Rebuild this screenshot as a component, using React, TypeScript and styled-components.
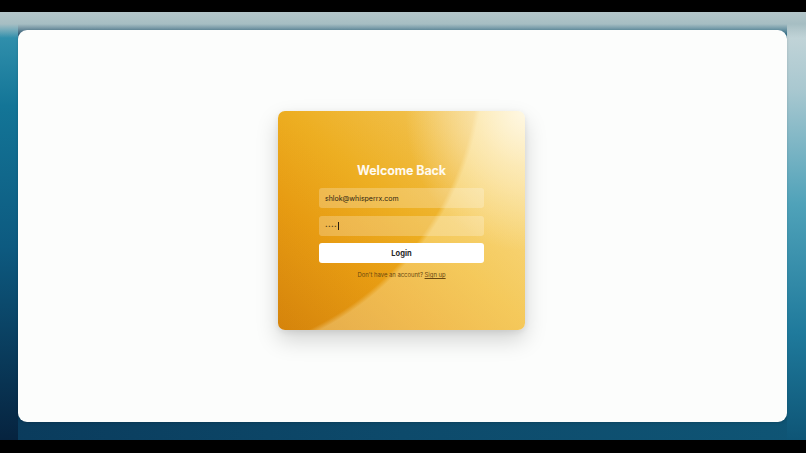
import React from "react";
import styled, { createGlobalStyle } from "styled-components";

const GlobalStyle = createGlobalStyle`
  html, body { margin: 0; padding: 0; background: #000; }
  body { font-family: "Inter", "Liberation Sans", Arial, sans-serif; }
  * { box-sizing: border-box; }
`;

const Frame = styled.div`
  width: 806px;
  height: 453px;
  display: flex;
  flex-direction: column;
  background: #000;
  overflow: hidden;
`;

const BlackBar = styled.div<{ $h: number }>`
  height: ${(p) => p.$h}px;
  flex: none;
  background: #000;
`;

const Stage = styled.div`
  flex: 1;
  display: flex;
  padding: 18px 19px 18px 18px;
  background:
    linear-gradient(180deg, #b3c5c9 0px, #a6bec3 12px, rgba(166, 190, 195, 0) 26px) top / 100% 30px no-repeat,
    linear-gradient(180deg, #3a98b3 0%, #137597 22%, #0d5a80 55%, #06233f 100%) left / 18px 100% no-repeat,
    linear-gradient(180deg, #ccd9db 0%, #a9c8d0 18%, #4fa2b9 45%, #1f7a9c 75%, #0e5576 100%) right / 19px 100% no-repeat,
    linear-gradient(90deg, #0a3b5c 0%, #0d4a6b 50%, #0f5575 100%);
`;

const Panel = styled.div`
  flex: 1;
  display: flex;
  align-items: center;
  justify-content: center;
  background: #fcfdfc;
  border-radius: 9px;
  box-shadow: 0 1px 3px rgba(0, 0, 0, 0.15);
`;

const Card = styled.div`
  width: 247px;
  height: 219px;
  margin: 0 2px 11px 0;
  border-radius: 7px;
  display: flex;
  flex-direction: column;
  align-items: center;
  padding-top: 52px;
  box-shadow: 0 10px 22px rgba(0, 0, 0, 0.17), 0 2px 6px rgba(0, 0, 0, 0.08);
  background:
    radial-gradient(ellipse 120px 140px at 100% 0%, rgba(255, 250, 235, 0.9) 0%, rgba(255, 246, 220, 0.55) 40%, rgba(255, 243, 210, 0) 100%),
    radial-gradient(circle 303px at -98px -51px, rgba(225, 140, 8, 0.14) 98.6%, rgba(255, 238, 185, 0.36) 100.4%),
    linear-gradient(to top right, #d3820c 0%, #e89e14 30%, #efb426 52%, #f3c650 75%, #f7dc8e 100%);
`;

const Title = styled.h1`
  margin: 0 0 10px;
  font-size: 12.5px;
  line-height: 15px;
  font-weight: 700;
  color: #fffaf0;
  letter-spacing: -0.1px;
`;

const Form = styled.div`
  width: 165px;
  display: flex;
  flex-direction: column;
  gap: 8px;
`;

const Field = styled.div`
  height: 20px;
  border-radius: 3px;
  background: rgba(255, 255, 255, 0.24);
  display: flex;
  align-items: center;
  padding-left: 6px;
  font-size: 7px;
  color: #2e2410;
`;

const Dots = styled.span`
  font-size: 8px;
  font-weight: 700;
  letter-spacing: 0.3px;
  color: #3a2c10;
`;

const Caret = styled.span`
  display: inline-block;
  width: 1px;
  height: 8px;
  margin-left: 1px;
  background: #2a2010;
`;

const Button = styled.div`
  height: 20px;
  margin-top: -1px;
  border-radius: 3px;
  background: #ffffff;
  display: flex;
  align-items: center;
  justify-content: center;
  font-size: 7.5px;
  font-weight: 700;
  color: #262626;
`;

const Footer = styled.p`
  margin: 8px 0 0;
  font-size: 5.9px;
  line-height: 8px;
  color: #6a4810;
`;

const SignUp = styled.span`
  text-decoration: underline;
`;

export default function App() {
  return (
    <>
      <GlobalStyle />
      <Frame>
        <BlackBar $h={12} />
        <Stage>
          <Panel>
            <Card>
              <Title>Welcome Back</Title>
              <Form>
                <Field>shlok@whisperrx.com</Field>
                <Field>
                  <Dots>····</Dots>
                  <Caret />
                </Field>
                <Button>Login</Button>
              </Form>
              <Footer>
                Don't have an account? <SignUp>Sign up</SignUp>
              </Footer>
            </Card>
          </Panel>
        </Stage>
        <BlackBar $h={13} />
      </Frame>
    </>
  );
}
